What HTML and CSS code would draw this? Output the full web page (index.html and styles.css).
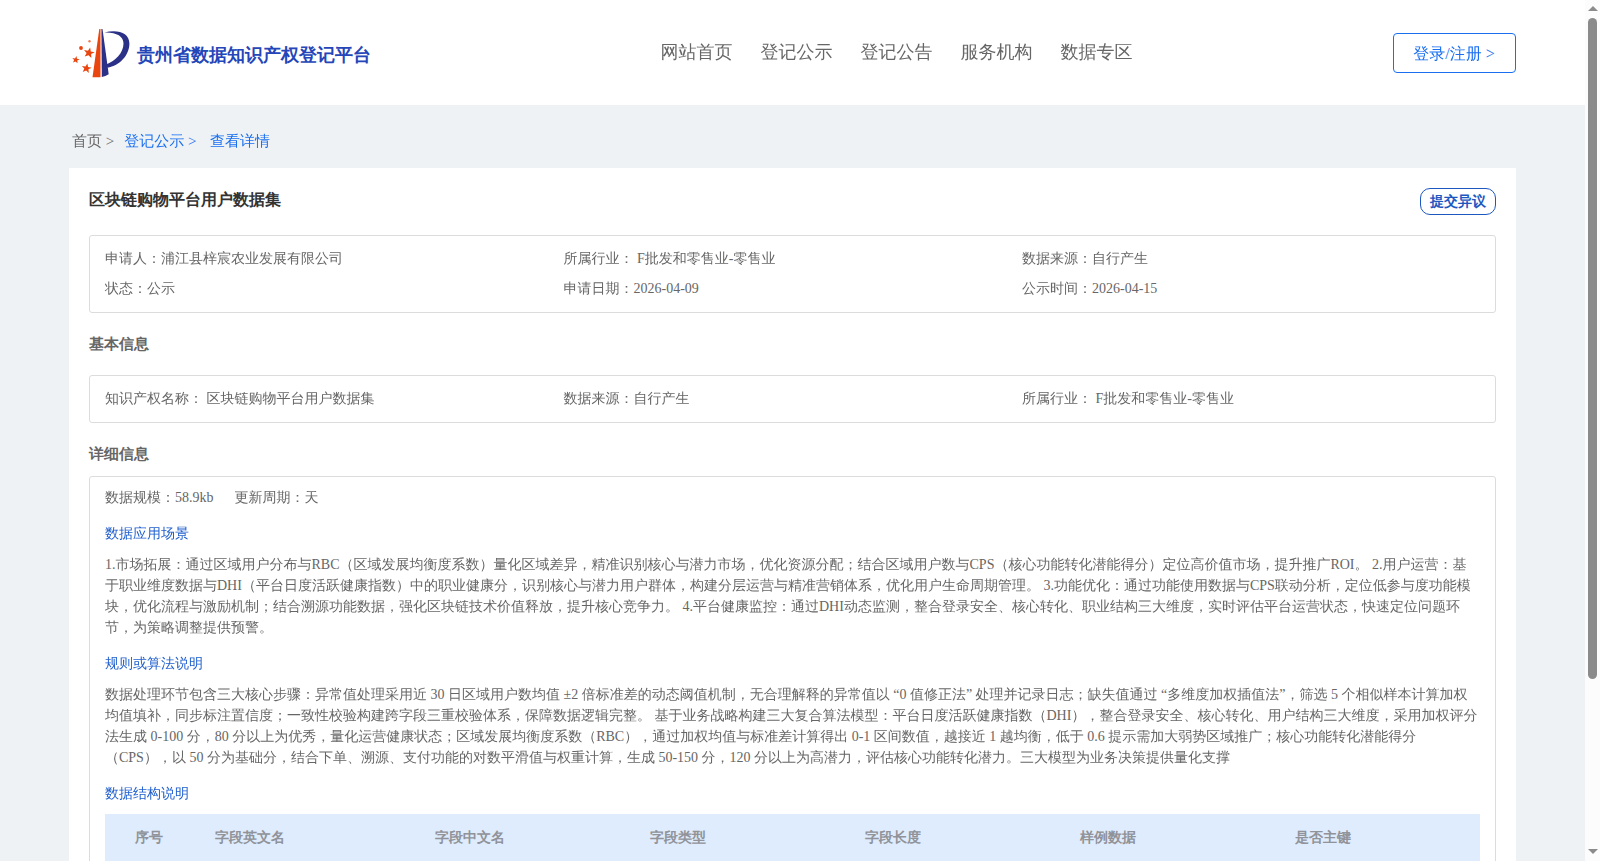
FILE: index.html
```html
<!DOCTYPE html>
<html lang="en">
<head>
    <meta charset="UTF-8">
    <meta name="viewport" content="width=device-width, initial-scale=1.0">
    <title>贵州省数据知识产权登记平台</title>
    <link rel="stylesheet" href="styles.css">
</head>
<body>
    <div class="page">
        <header class="header">
            <div class="logo">
                <svg class="logo-icon" width="58" height="50" viewBox="0 0 58 50">
                    <path d="M27.300 1L28.500 1L28.500 49.300H20.500Z" fill="#e8450f"/>
                    <path d="M29.400 1L30.500 1L36.700 46.300Q33.500 48.500 29.800 49.100Z" fill="#2b3187"/>
                    <path d="M32.300 4.500C46 1 57.400 5 57.400 15.500C57.400 27 48 37.500 35.300 39.800L34.700 36.300C43 33 51.500 25 51.500 15.500C51.500 8 44 4 32.300 4.500Z" fill="#2b3187"/>
                    <path d="M0-5L1.300-1.600L5-1.500L2.100 0.700L3.100 4.200L0 2.200L-3.100 4.200L-2.100 0.700L-5-1.500L-1.300-1.600Z" fill="#e8450f" transform="translate(17 24.800) rotate(12) scale(1.100)"/>
                    <path d="M0-5L1.300-1.600L5-1.500L2.100 0.700L3.100 4.200L0 2.200L-3.100 4.200L-2.100 0.700L-5-1.500L-1.300-1.600Z" fill="#e8450f" transform="translate(14.500 40.300) rotate(10)"/>
                    <path d="M0-5L1.300-1.600L5-1.500L2.100 0.700L3.100 4.200L0 2.200L-3.100 4.200L-2.100 0.700L-5-1.500L-1.300-1.600Z" fill="#e8450f" transform="translate(3.800 31.800) rotate(10) scale(.75)"/>
                    <circle cx="9" cy="20" r="1.900" fill="#e8450f"/>
                    <circle cx="17.500" cy="13.200" r="1.200" fill="#ee7d55"/>
                </svg>
                <span class="logo-text">贵州省数据知识产权登记平台</span>
            </div>
            <nav class="nav">
                <a>网站首页</a>
                <a>登记公示</a>
                <a>登记公告</a>
                <a>服务机构</a>
                <a>数据专区</a>
            </nav>
            <a class="login">登录/注册 &gt;</a>
        </header>

        <main class="container">
            <div class="breadcrumb">
                <span>首页 &gt;</span>
                <a class="crumb-list">登记公示 &gt;</a>
                <a class="crumb-detail">查看详情</a>
            </div>

            <div class="card">
                <div class="card-top">
                    <h1>区块链购物平台用户数据集</h1>
                    <button class="objection">提交异议</button>
                </div>

                <div class="box info">
                    <div>申请人：浦江县梓宸农业发展有限公司</div>
                    <div>所属行业： F批发和零售业-零售业</div>
                    <div>数据来源：自行产生</div>
                    <div>状态：公示</div>
                    <div>申请日期：2026-04-09</div>
                    <div>公示时间：2026-04-15</div>
                </div>

                <h2 class="basic-title">基本信息</h2>
                <div class="box info">
                    <div>知识产权名称： 区块链购物平台用户数据集</div>
                    <div>数据来源：自行产生</div>
                    <div>所属行业： F批发和零售业-零售业</div>
                </div>

                <h2 class="detail-title">详细信息</h2>
                <div class="box detail">
                    <div class="scale"><span>数据规模：58.9kb</span><span>更新周期：天</span></div>
                    <h3>数据应用场景</h3>
                    <p>1.市场拓展：通过区域用户分布与RBC（区域发展均衡度系数）量化区域差异，精准识别核心与潜力市场，优化资源分配；结合区域用户数与CPS（核心功能转化潜能得分）定位高价值市场，提升推广ROI。 2.用户运营：基于职业维度数据与DHI（平台日度活跃健康指数）中的职业健康分，识别核心与潜力用户群体，构建分层运营与精准营销体系，优化用户生命周期管理。 3.功能优化：通过功能使用数据与CPS联动分析，定位低参与度功能模块，优化流程与激励机制；结合溯源功能数据，强化区块链技术价值释放，提升核心竞争力。 4.平台健康监控：通过DHI动态监测，整合登录安全、核心转化、职业结构三大维度，实时评估平台运营状态，快速定位问题环节，为策略调整提供预警。</p>
                    <h3>规则或算法说明</h3>
                    <p>数据处理环节包含三大核心步骤：异常值处理采用近 30 日区域用户数均值 ±2 倍标准差的动态阈值机制，无合理解释的异常值以 “0 值修正法” 处理并记录日志；缺失值通过 “多维度加权插值法”，筛选 5 个相似样本计算加权均值填补，同步标注置信度；一致性校验构建跨字段三重校验体系，保障数据逻辑完整。 基于业务战略构建三大复合算法模型：平台日度活跃健康指数（DHI），整合登录安全、核心转化、用户结构三大维度，采用加权评分法生成 0-100 分，80 分以上为优秀，量化运营健康状态；区域发展均衡度系数（RBC），通过加权均值与标准差计算得出 0-1 区间数值，越接近 1 越均衡，低于 0.6 提示需加大弱势区域推广；核心功能转化潜能得分（CPS），以 50 分为基础分，结合下单、溯源、支付功能的对数平滑值与权重计算，生成 50-150 分，120 分以上为高潜力，评估核心功能转化潜力。三大模型为业务决策提供量化支撑</p>
                    <h3>数据结构说明</h3>
                    <div class="table-head">
                        <span>序号</span>
                        <span>字段英文名</span>
                        <span>字段中文名</span>
                        <span>字段类型</span>
                        <span>字段长度</span>
                        <span>样例数据</span>
                        <span>是否主键</span>
                    </div>
                </div>
            </div>
        </main>
    </div>
    <div class="scrollbar">
        <i class="arrow-up"></i>
        <i class="thumb"></i>
        <i class="arrow-down"></i>
    </div>
</body>
</html>
```
FILE: styles.css
```css
* {
    box-sizing: border-box;
}

body {
    display: flex;
    height: 861px;
    margin: 0;
    overflow: hidden;
    font-family: "Liberation Serif", "WenQuanYi Zen Hei", "Noto Sans CJK SC", serif;
    font-size: 14px;
    line-height: 21px;
    color: #666;
    background-color: #eef2f5;
}

h1, h2, h3, p {
    margin: 0;
}

h1, h2, .logo-text, .objection, .table-head {
    font-family: "Liberation Serif", serif;
}

.page {
    flex: 1;
    min-width: 0;
}

.header {
    display: flex;
    justify-content: space-between;
    height: 105px;
    padding: 0 69px;
    background-color: #fff;
}

.logo {
    display: flex;
    width: 591.6px;
    padding: 28px 0 0 3px;
}

.logo-text {
    margin: 14px 0 0 7px;
    font-size: 18px;
    line-height: 26px;
    font-weight: bold;
    color: #2446b8;
}

.nav {
    display: flex;
    flex: 1;
    gap: 28px;
    padding-top: 39px;
    font-size: 18px;
    line-height: 26px;
}

.login {
    width: 123px;
    height: 40px;
    padding-right: 1px;
    margin-top: 33px;
    border: 1px solid #1a6ff0;
    border-radius: 4px;
    font-size: 16px;
    line-height: 39px;
    text-align: center;
    color: #1a6ff0;
}

.container {
    padding: 0 69px;
}

.breadcrumb {
    display: flex;
    height: 63px;
    padding: 25px 0 0 3px;
    font-size: 15px;
    line-height: 22px;
}

.breadcrumb a {
    color: #1a6ff0;
}

.crumb-list {
    margin-left: 10px;
}

.crumb-detail {
    margin-left: 13.5px;
}

.card {
    height: 720px;
    padding: 20px 20px 0;
    background-color: #fff;
}

.card-top {
    display: flex;
    justify-content: space-between;
    height: 47px;
}

h1 {
    font-size: 16px;
    line-height: 24px;
    color: #333;
}

.objection {
    width: 76px;
    height: 27px;
    padding: 0;
    border: 1px solid #1d57c0;
    border-radius: 10px;
    background-color: #fff;
    font-size: 14px;
    font-weight: bold;
    color: #1d57c0;
}

.box {
    border: 1px solid #dcdcdc;
    border-radius: 3px;
    padding: 0 15px;
}

.info {
    display: grid;
    grid-template-columns: repeat(3, 1fr);
    padding: 8px 14.5px 8px 15px;
    line-height: 30px;
}

.info div {
    height: 30px;
}

h2 {
    font-size: 15px;
    line-height: 22px;
}

.basic-title {
    margin: 20px 0;
}

.detail-title {
    margin: 20px 0 11px;
}

.detail {
    height: 420px;
    padding-top: 10px;
}

.scale span {
    margin-right: 21px;
}

h3 {
    margin: 15px 0 10px;
    font-size: 14px;
    font-weight: normal;
    color: #1f5fce;
}

.table-head {
    display: grid;
    grid-template-columns: 110px 220px repeat(4, 215px) 1fr;
    height: 60px;
    background-color: #dfecfe;
    font-weight: bold;
    line-height: 47px;
    color: #909399;
}

.table-head span:first-child {
    padding-left: 30px;
}

.scrollbar {
    display: flex;
    flex-direction: column;
    align-items: center;
    width: 15px;
    background-color: #fcfcfc;
}

.thumb {
    width: 9px;
    height: 661px;
    margin-bottom: 170px;
    border-radius: 5px;
    background-color: #8b8b8b;
}

.arrow-up,
.arrow-down {
    border: 5px solid transparent;
}

.arrow-up {
    margin: 1px 0 7px;
    border-bottom-color: #8b8b8b;
}

.arrow-down {
    border-top-color: #8b8b8b;
    border-bottom: none;
}
```
